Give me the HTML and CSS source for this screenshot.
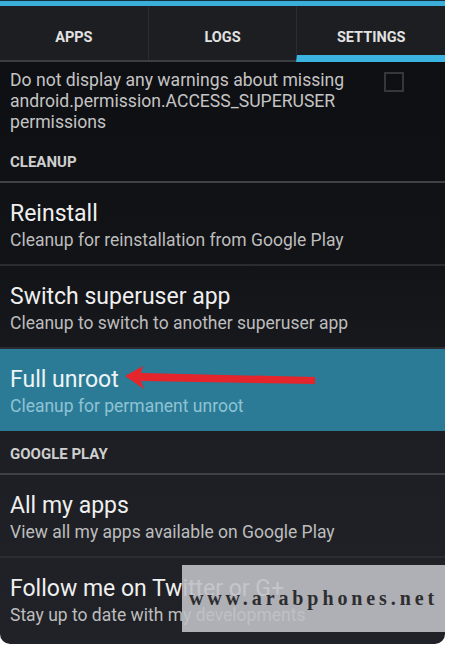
FILE: index.html
```html
<html>
  <head>
    <meta http-equiv="Content-Type" content="text/html; charset=utf-8" />
    <title>Superuser settings</title>
    <link rel="stylesheet" href="styles.css">
  </head>
  <body>
    <div class="screen">
      <div class="accent"></div>
      <ul class="tabs">
        <li class="tab">APPS</li>
        <li class="tab">LOGS</li>
        <li class="tab active">SETTINGS</li>
      </ul>

      <div class="pref check">
        <div class="pref-text">Do not display any warnings about missing android.permission.ACCESS_SUPERUSER permissions</div>
        <div class="box"></div>
      </div>

      <div class="category">CLEANUP</div>

      <div class="item">
        <div class="title">Reinstall</div>
        <div class="summary">Cleanup for reinstallation from Google Play</div>
      </div>
      <div class="item">
        <div class="title">Switch superuser app</div>
        <div class="summary">Cleanup to switch to another superuser app</div>
      </div>
      <div class="item selected">
        <div class="title">Full unroot</div>
        <div class="summary">Cleanup for permanent unroot</div>
        <svg class="arrow" width="200" height="30" viewBox="0 0 200 30">
          <polygon points="0,11 18,1 16,8 190,12 190,19 16,16 19,24" fill="#e4252b" />
        </svg>
      </div>

      <div class="category spaced">GOOGLE PLAY</div>

      <div class="item">
        <div class="title">All my apps</div>
        <div class="summary">View all my apps available on Google Play</div>
      </div>
      <div class="item last">
        <div class="title">Follow me on Twitter or G+</div>
        <div class="summary">Stay up to date with my developments</div>
      </div>

      <div class="watermark">www.arabphones.net</div>
    </div>
  </body>
</html>
```

FILE: styles.css
```css
body {
    margin: 0;
    background: #fff;
    font-family: Roboto, "Noto Sans", sans-serif;
}

.screen {
    position: relative;
    width: 445px;
    height: 644px;
    overflow: hidden;
    background: linear-gradient(#0d0e11, #121317 40%, #1d1f24 70%, #202227);
    border-radius: 0 0 10px 10px;
}

.accent {
    height: 5px;
    border-top: 1px solid #16323f;
    background: #3aaed8;
}

.tabs {
    display: flex;
    margin: 0;
    padding: 0;
    height: 54px;
    background: #1c1e21;
    border-bottom: 2px solid #3b3d41;
}
.tab {
    list-style-type: none;
    flex: 1;
    display: flex;
    align-items: center;
    justify-content: center;
    color: #e2e2e2;
    font-weight: bold;
    font-size: 14.5px;
    border-left: 1px solid #2a2c30;
    padding-top: 8px;
}
.tab:first-child {
    border-left: none;
}
.tab.active {
    border-bottom: 7px solid #3cb4e0;
    margin-bottom: -2px;
    padding-top: 13px;
}

.pref {
    display: flex;
    padding: 8px 10px 0 10px;
    height: 76px;
}
.pref-text {
    flex: 1;
    color: #c4c4c4;
    font-size: 17.6px;
    line-height: 21px;
    padding-right: 30px;
}
.box {
    width: 16px;
    height: 16px;
    border: 2px solid #35373b;
    margin: 2px 31px 0 0;
}

.category {
    color: #cfcfcf;
    font-weight: bold;
    font-size: 15px;
    height: 35px;
    line-height: 32px;
    padding-left: 10px;
    border-bottom: 2px solid #3f4146;
}
.category.spaced {
    height: 42px;
    line-height: 46px;
}

.item {
    position: relative;
    height: 81px;
    padding-left: 10px;
    border-bottom: 2px solid #2a2c31;
}
.item.last {
    border-bottom: none;
}
.title {
    color: #efefef;
    font-size: 23px;
    padding-top: 16px;
    line-height: 29px;
}
.summary {
    color: #bdbdbd;
    font-size: 17.5px;
    line-height: 22px;
    padding-top: 1px;
}
.selected {
    background: #2b7b97;
    border-bottom: none;
    height: 82px;
}
.selected .title {
    color: #eef4f6;
}
.selected .summary {
    color: #8fc3d4;
}

.arrow {
    position: absolute;
    left: 125px;
    top: 16px;
}

.watermark {
    position: absolute;
    left: 182px;
    top: 565px;
    width: 263px;
    height: 67px;
    background: rgba(191, 192, 197, 0.9);
    color: #2e2e30;
    font-family: "Liberation Serif", "DejaVu Serif", serif;
    font-weight: bold;
    font-size: 20px;
    letter-spacing: 3.9px;
    line-height: 66px;
    text-align: center;
}
```
